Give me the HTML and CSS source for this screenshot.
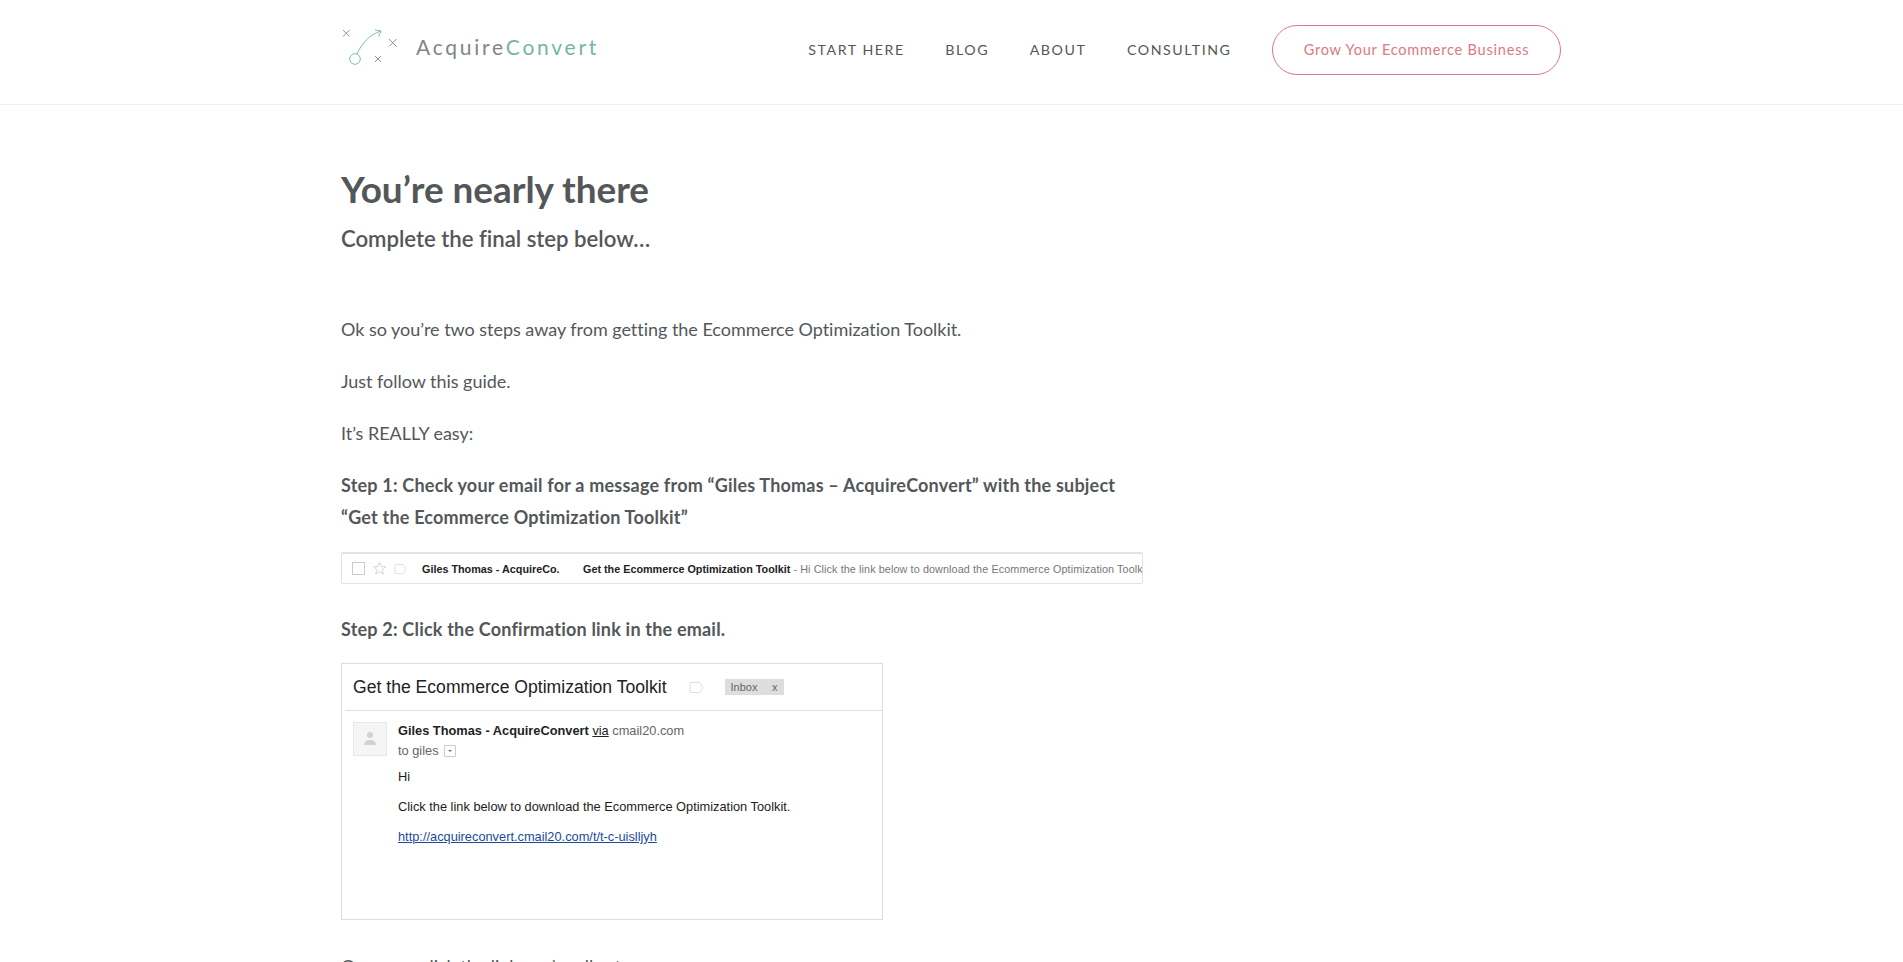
FILE: index.html
```html
<!DOCTYPE html>
<html lang="en">
<head>
  <meta charset="UTF-8">
  <meta name="viewport" content="width=device-width, initial-scale=1.0">
  <title>You're nearly there - AcquireConvert</title>
  <link rel="stylesheet" href="styles.css">
</head>
<body>
  <header class="site-header">
    <div class="wrap header-inner">
      <a class="logo" href="#">
        <svg class="logo-mark" width="60" height="44" viewBox="0 0 60 44" fill="none">
          <g stroke="#8f9696" stroke-width="1">
            <path d="M2 7l6.500 6.500M8.500 7L2 13.500"/>
            <path d="M48 16l7.500 7.500M55.500 16L48 23.500"/>
            <path d="M34 33l6 6M40 33l-6 6"/>
          </g>
          <g stroke="#7fbdb2" stroke-width="1">
            <circle cx="14" cy="36" r="5.300"/>
            <path d="M16 31C21 20 28 12 40 8"/>
            <path d="M34 7l6 1-2.500 5.500"/>
          </g>
        </svg>
        <span class="logo-text">Acquire<span class="logo-accent">Convert</span></span>
      </a>
      <nav class="main-nav">
        <a href="#">START HERE</a>
        <a href="#">BLOG</a>
        <a href="#">ABOUT</a>
        <a href="#">CONSULTING</a>
        <a class="nav-button" href="#">Grow Your Ecommerce Business</a>
      </nav>
    </div>
  </header>

  <main class="wrap">
    <div class="content">
      <h1>You’re nearly there</h1>
      <h2>Complete the final step below…</h2>

      <p class="first">Ok so you’re two steps away from getting the Ecommerce Optimization Toolkit.</p>
      <p>Just follow this guide.</p>
      <p>It’s REALLY easy:</p>
      <p><strong>Step 1: Check your email for a message from “Giles Thomas – AcquireConvert” with the subject “Get the Ecommerce Optimization Toolkit”</strong></p>

      <div class="inbox-row">
        <span class="checkbox"></span>
        <svg class="star" width="15" height="15" viewBox="0 0 15 15" fill="none" stroke="#d4d4d4"><path d="M7.5 1.5l1.8 4 4.3.4-3.3 2.8 1 4.3-3.8-2.3-3.8 2.3 1-4.3L1.400 5.900l4.300-.4z"/></svg>
        <svg class="tag" width="13" height="10" viewBox="0 0 13 10" fill="none" stroke="#e2e2e2"><path d="M1 .5h8l3 4.500-3 4.500H1z"/></svg>
        <span class="sender">Giles Thomas - AcquireCo.</span>
        <span class="subject">Get the Ecommerce Optimization Toolkit <span class="snippet">- Hi Click the link below to download the Ecommerce Optimization Toolkit</span></span>
      </div>

      <p class="step-two"><strong>Step 2: Click the Confirmation link in the email.</strong></p>

      <div class="mail">
        <div class="mail-head">
          <span class="mail-title">Get the Ecommerce Optimization Toolkit</span>
          <svg class="mail-tag" width="15" height="11" viewBox="0 0 15 11" fill="none" stroke="#dedede"><path d="M1 .5h9.500l3.500 5-3.500 5H1z"/></svg>
          <span class="chip"><span>Inbox</span><span>x</span></span>
        </div>
        <div class="mail-body">
          <div class="avatar">
            <svg width="14" height="16" viewBox="0 0 14 16" fill="#d2d2d2"><circle cx="7" cy="4" r="3"/><path d="M1 14c0-4 3-5 6-5s6 1 6 5z"/></svg>
          </div>
          <div class="mail-text">
            <div class="from"><b>Giles Thomas - AcquireConvert</b> <u>via</u> <span class="grey">cmail20.com</span></div>
            <div class="to"><span class="grey">to giles</span> <span class="caret"></span></div>
            <div class="line hi">Hi</div>
            <div class="line">Click the link below to download the Ecommerce Optimization Toolkit.</div>
            <div class="line"><a href="#">http://acquireconvert.cmail20.com/t/t-c-uislljyh</a></div>
          </div>
        </div>
      </div>

      <p class="after">Once you click the link you’re all set</p>
    </div>
  </main>
</body>
</html>
```

FILE: styles.css
```css
html, body { height: 962px; overflow: hidden; }
body { margin: 0; background: #fff; color: #54575a; font-family: "Lato", "Liberation Sans", sans-serif; font-size: 18px; line-height: 32px; letter-spacing: -.03px; }
a { color: inherit; text-decoration: none; }
.wrap { width: 1220px; margin-left: 341px; }

.site-header { height: 104px; border-bottom: 1px solid #f0f0f0; }
.header-inner { display: flex; justify-content: space-between; align-items: center; height: 100px; }
.logo { display: flex; align-items: center; gap: 15px; margin-top: -6px; }
.logo-mark { display: block; margin-top: -5px; }
.logo-text { font-size: 21px; font-weight: 400; letter-spacing: 2.75px; color: #808686; line-height: 30px; }
.logo-accent { color: #75b5ab; }
.main-nav { display: flex; align-items: center; gap: 40.500px; font-size: 14.200px; letter-spacing: 1.55px; color: #54575a; }
.nav-button { display: block; width: 289px; height: 50px; box-sizing: border-box; border: 1px solid #dc7785; border-radius: 25px; color: #dc7785; text-align: center; line-height: 48px; font-size: 14.500px; letter-spacing: .8px; }

.content { width: 802px; }
h1 { margin: 57px 0 0; font-size: 36.900px; line-height: 54px; font-weight: 700; color: #54575a; }
h2 { margin: 4px 0 0; font-size: 22.200px; line-height: 38px; font-weight: 600; color: #54575a; }
p { margin: 20px 0 0; }
p.first { margin-top: 55px; }
strong { font-weight: 700; letter-spacing: .2px; }

.inbox-row { display: flex; align-items: center; height: 32px; margin-top: 19px; padding-left: 10px; box-sizing: border-box; border: 1px solid #e2e2e2; border-top-width: 2px; border-radius: 2px; overflow: hidden; white-space: nowrap; font-family: "Liberation Sans", sans-serif; font-size: 10.800px; line-height: 14px; color: #222; font-weight: 700; letter-spacing: 0; }
.checkbox { flex: none; width: 11px; height: 11px; border: 1px solid #ccc; }
.star { flex: none; margin-left: 7px; }
.tag { flex: none; margin-left: 7px; }
.sender { flex: none; margin-left: 15px; width: 161px; }
.subject { flex: none; }
.snippet { font-weight: 400; color: #777; letter-spacing: .1px; }

.step-two { margin-top: 29px; }

.mail { width: 542px; height: 257px; margin-top: 18px; box-sizing: border-box; border: 1px solid #ddd; font-family: "Liberation Sans", sans-serif; color: #222; letter-spacing: 0; }
.mail-head { display: flex; align-items: center; height: 46px; margin-left: 3px; padding-left: 8px; border-bottom: 1px solid #ddd; }
.mail-title { font-size: 17.600px; line-height: 24px; }
.mail-tag { margin-left: 22px; }
.chip { display: flex; justify-content: space-between; width: 59px; height: 16px; box-sizing: border-box; margin-left: 21px; padding: 0 6px; background: #ddd; color: #666; font-size: 11px; line-height: 16px; }
.mail-body { display: flex; padding: 11px 0 0 11px; }
.avatar { display: flex; align-items: center; justify-content: center; flex: none; width: 32px; height: 32px; background: #f5f5f5; border: 1px solid #e8e8e8; }
.mail-text { margin-left: 11px; font-size: 12.800px; line-height: 20px; }
.from { margin-top: -1px; }
.grey { color: #666; }
.to { display: flex; align-items: center; gap: 5px; }
.caret { position: relative; width: 10px; height: 10px; border: 1px solid #ccc; border-radius: 1px; }
.caret::after { content: ""; position: absolute; left: 3px; top: 4px; border: 2px solid transparent; border-top-color: #777; }
.line { margin-top: 10px; color: #1c1c1c; }
.hi { margin-top: 6px; }
.line a { color: #1a4a9c; text-decoration: underline; }

.after { margin-top: 30px; }
```
